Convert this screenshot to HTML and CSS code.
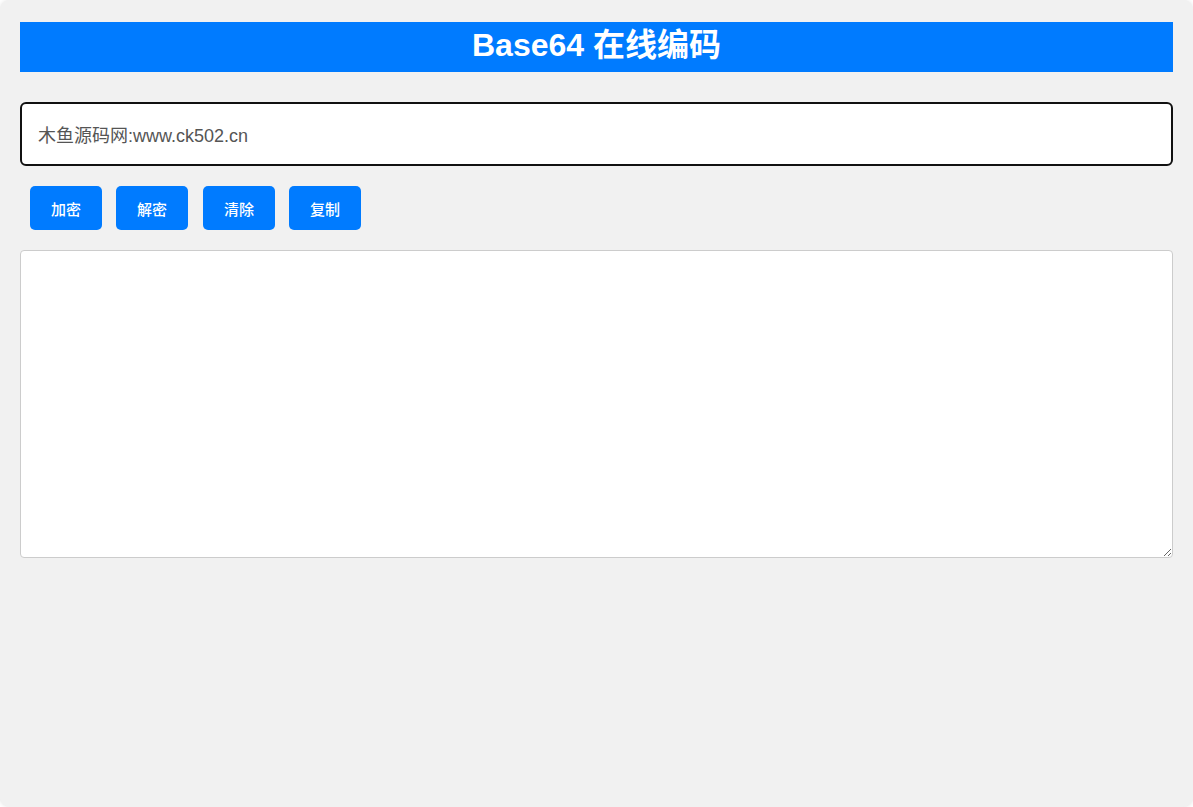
FILE: index.html
```html
<!DOCTYPE html>
<html lang="zh-CN">
<head>
<meta charset="utf-8">
<title>Base64 在线编码</title>
<link rel="stylesheet" href="styles.css">
</head>
<body>
<div class="container">
  <h1 class="title">Base64 在线编码</h1>
  <input class="input" type="text" value="木鱼源码网:www.ck502.cn">
  <div class="actions">
    <button class="btn">加密</button>
    <button class="btn">解密</button>
    <button class="btn">清除</button>
    <button class="btn">复制</button>
  </div>
  <textarea class="output"></textarea>
</div>
</body>
</html>
```
FILE: styles.css
```css
html, body {
  margin: 0;
  padding: 0;
  background: #ffffff;
  font-family: "Liberation Sans", Arial, "Noto Sans CJK SC", sans-serif;
}
.container {
  box-sizing: border-box;
  height: 807px;
  background: #f1f1f1;
  border-radius: 10px;
  box-shadow: 0 0 4px rgba(0,0,0,0.12);
  padding: 22px 20px 20px;
  display: flex;
  flex-direction: column;
}
.title {
  margin: 0;
  height: 50px;
  line-height: 46px;
  background: #007bff;
  color: #fff;
  text-align: center;
  font-size: 32px;
  font-weight: bold;
}
.input {
  box-sizing: border-box;
  margin-top: 30px;
  width: 100%;
  height: 64px;
  border: 2px solid #111;
  border-radius: 6px;
  background: #fff;
  padding: 0 16px;
  font-family: "Liberation Sans", Arial, "Noto Sans CJK SC", sans-serif;
  font-size: 18px;
  color: #555;
  outline: none;
}
.actions {
  display: flex;
  gap: 14px;
  margin-top: 20px;
  padding-left: 10px;
}
.btn {
  box-sizing: border-box;
  width: 72px;
  height: 44px;
  border: none;
  border-radius: 5px;
  background: #007bff;
  color: #fff;
  font-family: "Liberation Sans", Arial, "Noto Sans CJK SC", sans-serif;
  font-size: 15px;
  font-weight: 500;
  padding: 0;
}
.actions .btn:nth-child(3) { margin-left: 1px; }
.output {
  box-sizing: border-box;
  margin-top: 20px;
  width: 100%;
  height: 308px;
  border: 1px solid #ccc;
  border-radius: 4px;
  background: #fff;
  resize: vertical;
  padding: 10px;
}
```
